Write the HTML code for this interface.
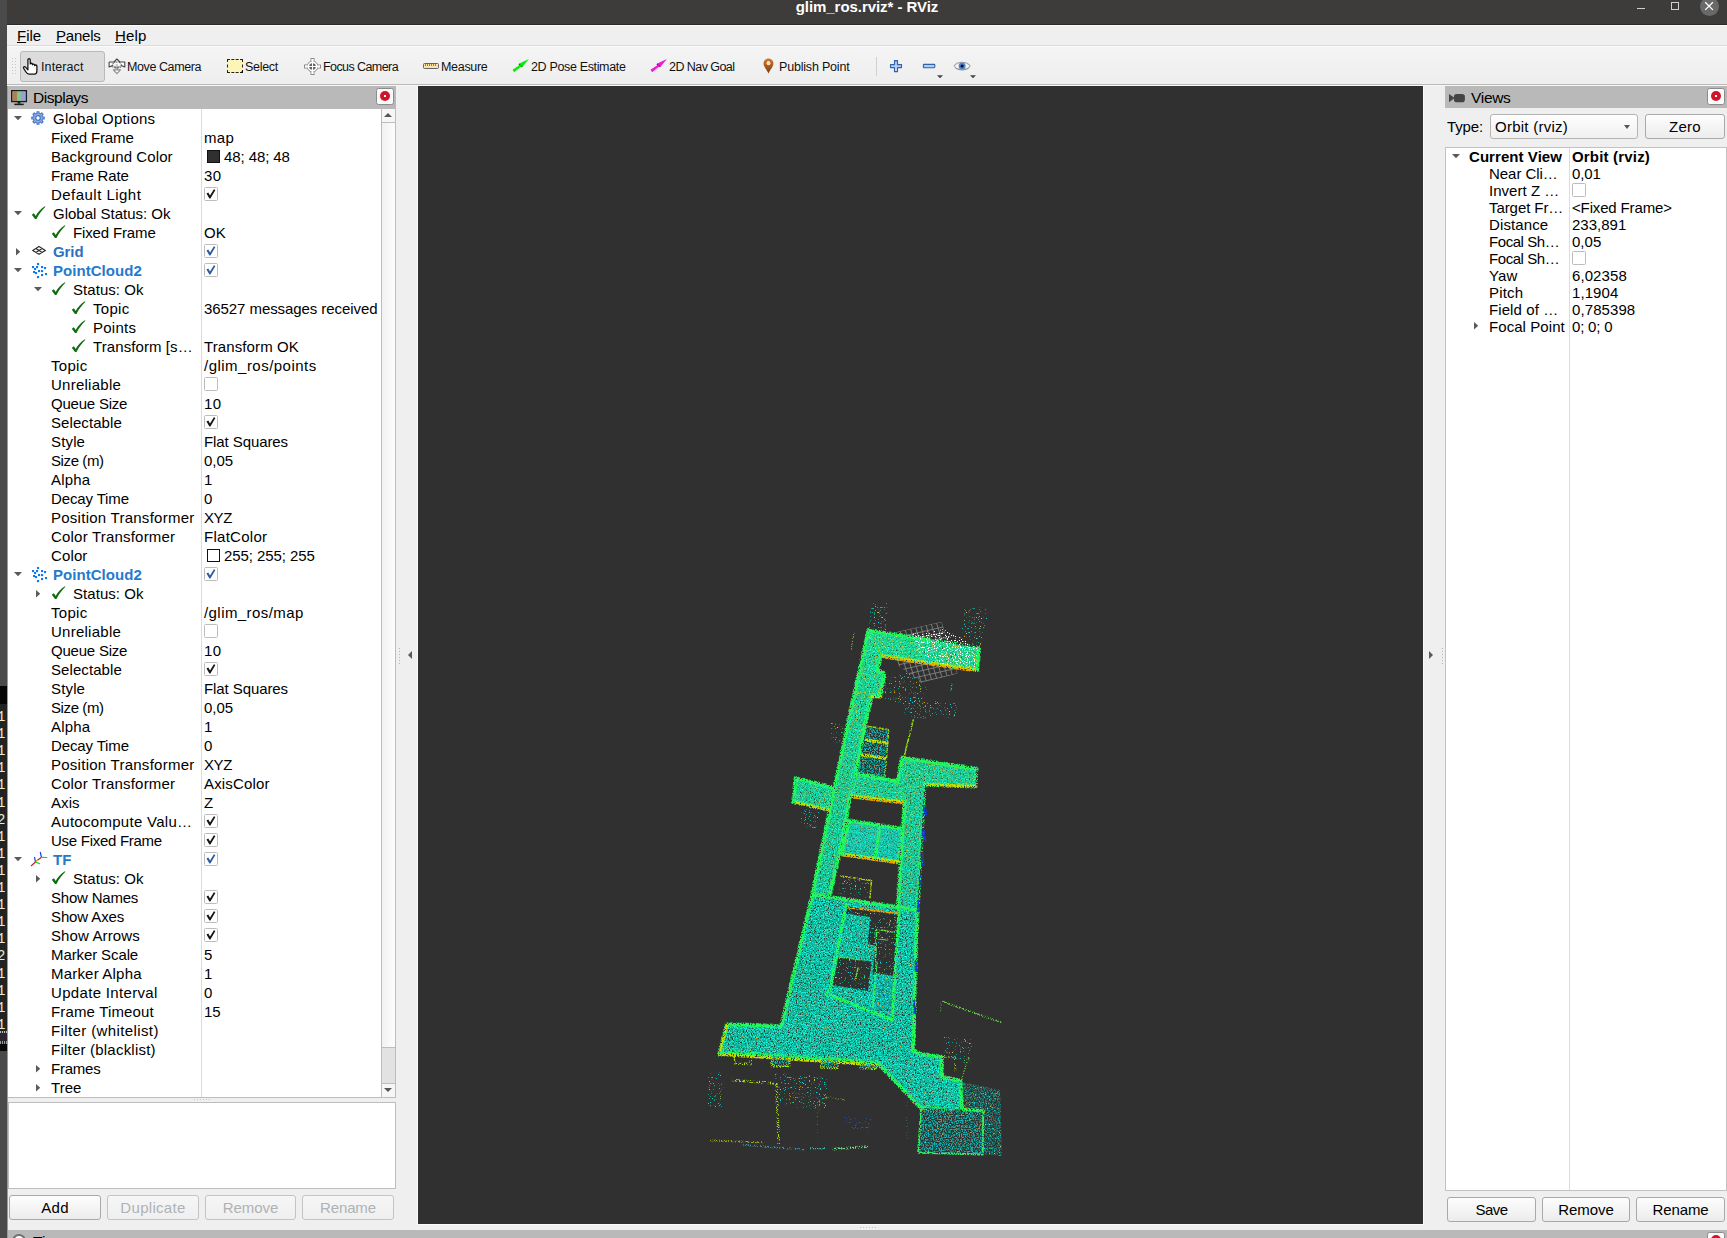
<!DOCTYPE html>
<html><head><meta charset="utf-8"><title>glim_ros.rviz* - RViz</title>
<style>
*{box-sizing:border-box;margin:0;padding:0}
html,body{width:1727px;height:1238px;overflow:hidden}
body{position:relative;background:#efefef;font-family:"Liberation Sans",sans-serif;font-size:15px;color:#000;line-height:19px}
.abs{position:absolute}
.t{position:absolute;white-space:nowrap;line-height:19px;height:19px}
#leftstrip{left:0;top:0;width:7px;height:1238px;background:#4a4a4a}
#titlebar{left:7px;top:0;width:1720px;height:25px;background:#3d3c3b}
#title{left:7px;width:1720px;top:-3px;text-align:center;color:#fff;font-weight:bold;font-size:15px;line-height:19px}
#menubar{left:7px;top:25px;width:1720px;height:21px;background:#efefef;border-top:1px solid #fbfbfb;border-bottom:1px solid #dcdcdc}
#toolbar{left:7px;top:46px;width:1720px;height:39px;background:linear-gradient(#f4f4f4,#eeeeee);border-top:1px solid #fbfbfb;border-bottom:1px solid #bcbab8}
#tbline{left:7px;top:85px;width:1720px;height:1px;background:#f7f7f7}
.menu{font-size:15.5px;top:26px}
.tb{font-size:13px;top:58px;color:#111}
.dockhead{background:#b9b9b9;height:22px}
.closebtn{width:18px;height:17px;background:#fafafa;border:1px solid #8c8c8c;border-radius:2.5px}
.closebtn i{position:absolute;left:3px;top:2px;width:10px;height:10px;border-radius:50%;background:#d0142c}
.closebtn i:before{content:"";position:absolute;left:4px;top:4px;width:2px;height:2px;background:#fff4e6}

.btn{position:absolute;height:25px;border:1px solid #a9a9a9;border-radius:3px;background:linear-gradient(#fdfdfd,#ececec);text-align:center;font-size:15px;line-height:23px;color:#000}
.btn.dis{color:#aeb2b6;border-color:#c4c4c4;background:linear-gradient(#f6f6f6,#efefef)}
.cb{position:absolute;width:14px;height:14px;border:1px solid #bdbdbd;border-radius:1.5px;background:#fff}
.cb svg{position:absolute;left:0;top:0}
.arr{position:absolute;width:0;height:0}
.arr.d{border-left:4px solid transparent;border-right:4px solid transparent;border-top:4.5px solid #5c5c5c}
.arr.r{border-top:3.8px solid transparent;border-bottom:3.8px solid transparent;border-left:4.5px solid #5c5c5c}
.blue{color:#267acc;font-weight:bold}
.blue2{color:#2f6fc0;font-weight:bold}

</style></head>
<body>
<div id="leftstrip" class="abs"></div>
<div id="titlebar" class="abs"></div>
<div class="abs" style="left:0;top:686px;width:7px;height:18px;background:#060506"></div>
<div class="abs" style="left:0;top:704px;width:7px;height:327px;background:#222424;overflow:hidden"><div style="position:absolute;left:-3px;top:5.0px;font-family:'Liberation Mono',monospace;font-size:14px;line-height:16px;color:#ecebd2">1</div><div style="position:absolute;left:-3px;top:22.1px;font-family:'Liberation Mono',monospace;font-size:14px;line-height:16px;color:#ecebd2">1</div><div style="position:absolute;left:-3px;top:39.2px;font-family:'Liberation Mono',monospace;font-size:14px;line-height:16px;color:#ecebd2">1</div><div style="position:absolute;left:-3px;top:56.3px;font-family:'Liberation Mono',monospace;font-size:14px;line-height:16px;color:#ecebd2">1</div><div style="position:absolute;left:-3px;top:73.4px;font-family:'Liberation Mono',monospace;font-size:14px;line-height:16px;color:#ecebd2">1</div><div style="position:absolute;left:-3px;top:90.5px;font-family:'Liberation Mono',monospace;font-size:14px;line-height:16px;color:#ecebd2">1</div><div style="position:absolute;left:-3px;top:107.6px;font-family:'Liberation Mono',monospace;font-size:14px;line-height:16px;color:#ecebd2">2</div><div style="position:absolute;left:-3px;top:124.7px;font-family:'Liberation Mono',monospace;font-size:14px;line-height:16px;color:#ecebd2">1</div><div style="position:absolute;left:-3px;top:141.8px;font-family:'Liberation Mono',monospace;font-size:14px;line-height:16px;color:#ecebd2">1</div><div style="position:absolute;left:-3px;top:158.9px;font-family:'Liberation Mono',monospace;font-size:14px;line-height:16px;color:#ecebd2">1</div><div style="position:absolute;left:-3px;top:176.0px;font-family:'Liberation Mono',monospace;font-size:14px;line-height:16px;color:#ecebd2">1</div><div style="position:absolute;left:-3px;top:193.1px;font-family:'Liberation Mono',monospace;font-size:14px;line-height:16px;color:#ecebd2">1</div><div style="position:absolute;left:-3px;top:210.2px;font-family:'Liberation Mono',monospace;font-size:14px;line-height:16px;color:#ecebd2">1</div><div style="position:absolute;left:-3px;top:227.3px;font-family:'Liberation Mono',monospace;font-size:14px;line-height:16px;color:#ecebd2">1</div><div style="position:absolute;left:-3px;top:244.4px;font-family:'Liberation Mono',monospace;font-size:14px;line-height:16px;color:#ecebd2">2</div><div style="position:absolute;left:-3px;top:261.5px;font-family:'Liberation Mono',monospace;font-size:14px;line-height:16px;color:#ecebd2">1</div><div style="position:absolute;left:-3px;top:278.6px;font-family:'Liberation Mono',monospace;font-size:14px;line-height:16px;color:#ecebd2">1</div><div style="position:absolute;left:-3px;top:295.7px;font-family:'Liberation Mono',monospace;font-size:14px;line-height:16px;color:#ecebd2">1</div><div style="position:absolute;left:-3px;top:312.8px;font-family:'Liberation Mono',monospace;font-size:14px;line-height:16px;color:#ecebd2">1</div></div>
<div class="abs" style="left:0;top:1031px;width:7px;height:2px;background:repeating-linear-gradient(90deg,#bbb 0 1px,#333 1px 2px)"></div>
<div class="abs" style="left:0;top:1033px;width:7px;height:8px;background:#2c2433"></div>
<div class="abs" style="left:0;top:1041px;width:7px;height:3px;background:repeating-linear-gradient(90deg,#999 0 1px,#222 1px 2px)"></div>
<div class="abs" style="left:0;top:1044px;width:7px;height:7px;background:#0a0a0a"></div>
<div class="abs" style="left:7px;top:25px;width:1px;height:1213px;background:#9a9a9a"></div>
<div id="title" class="t" style="letter-spacing:-0.05px">glim_ros.rviz* - RViz</div>
<div class="abs" style="left:1637px;top:8px;width:8px;height:1px;background:#d0d0d0"></div>
<div class="abs" style="left:1671px;top:2px;width:8px;height:8px;border:1px solid #d0d0d0"></div>
<div class="abs" style="left:1699.5px;top:-3.5px;width:19px;height:19px;border-radius:50%;background:#6a696a"></div>
<svg class="abs" style="left:1704px;top:1px" width="10" height="10" viewBox="0 0 10 10"><path d="M1.2 1.2 L8.9 8.9 M8.9 1.2 L1.2 8.9" stroke="#fff" stroke-width="1.3" fill="none"/></svg>
<div class="abs" style="left:7px;top:24px;width:1720px;height:1px;background:#2c2b2a"></div>
<div id="menubar" class="abs"></div>
<div id="toolbar" class="abs"></div>
<div id="tbline" class="abs"></div>
<div class="t menu" style="left:17px;font-size:15px;letter-spacing:-0.043px"><u>F</u>ile</div>
<div class="t menu" style="left:56px;font-size:15px;letter-spacing:-0.227px"><u>P</u>anels</div>
<div class="t menu" style="left:115px;font-size:15px;letter-spacing:0.163px"><u>H</u>elp</div>
<div class="abs" style="left:12px;top:58px;width:1px;height:17px;background:repeating-linear-gradient(180deg,#c6c6c6 0 1px,transparent 1px 3px)"></div>
<div class="abs" style="left:15px;top:58px;width:1px;height:17px;background:repeating-linear-gradient(180deg,#c6c6c6 0 1px,transparent 1px 3px)"></div>
<div class="abs" style="left:20px;top:51px;width:85px;height:31px;background:#dcdcdc;border:1px solid #b9b9b9;border-radius:3px"></div>
<svg class="abs" style="left:22px;top:56.5px" width="19" height="19" viewBox="0 0 18 18"><path d="M5.6 10.2 V2.6 C5.6 1.2 7.8 1.2 7.8 2.6 V6.6 C7.8 5.6 9.9 5.6 9.9 6.8 V7.4 C9.9 6.4 12 6.4 12 7.6 V8.2 C12 7.3 14.1 7.3 14.1 8.6 V13.2 C14.1 15 13.2 16.2 11.6 16.2 H6.8 C5.4 16.2 4.4 15.4 3.6 14 L1.6 10.8 C0.9 9.6 2.4 8.6 3.3 9.6 L5.6 12.2 Z" fill="#fff" stroke="#111" stroke-width="1.2" stroke-linejoin="round"/></svg>
<div class="t tb" style="left:41px;font-size:12.5px;letter-spacing:0.102px">Interact</div>
<svg class="abs" style="left:108px;top:57px" width="18" height="18" viewBox="0 0 18 18" fill="none" stroke-linejoin="round"><path d="M8.9 5 V13.2" stroke="#c8c8c8" stroke-width="2.2"/><path d="M5.4 12.9 L8.9 16.6 L12.5 12.9 Z" fill="#fff" stroke="#8c8c8c" stroke-width="1.1"/><path d="M1.1 5 H6 L8.9 2 L11.8 5 H16.8 V9.9 L13.3 8.4 M1.1 5 V9.9 L4.6 8.4" fill="#fff" stroke="#444" stroke-width="1.1"/><ellipse cx="8.9" cy="7.7" rx="4.4" ry="2.6" stroke="#444" stroke-width="1" stroke-dasharray="2 1"/><path d="M3.2 9 Q8.9 13.2 14.6 9" stroke="#555" stroke-width="1" stroke-dasharray="2 1"/></svg>
<div class="t tb" style="left:127px;font-size:12.5px;letter-spacing:-0.409px">Move Camera</div>
<div class="abs" style="left:227px;top:59px;width:16px;height:14px;background:#fdf5b8;border:1px dashed #222"></div>
<div class="abs" style="left:240px;top:70px;width:0;height:0;border-left:3px solid transparent;border-bottom:3px solid #111"></div>
<div class="t tb" style="left:245px;font-size:12.5px;letter-spacing:-0.29px">Select</div>
<svg class="abs" style="left:303px;top:57px" width="19" height="19" viewBox="0 0 19 19"><g fill="#fff" stroke="#8a8a8a" stroke-width="1"><rect x="8" y="1.5" width="3" height="16"/><rect x="1.5" y="8" width="16" height="3"/><circle cx="9.5" cy="9.5" r="5.4"/></g><rect x="8.55" y="2.2" width="1.9" height="14.6" fill="#fff"/><rect x="2.2" y="8.55" width="14.6" height="1.9" fill="#fff"/><circle cx="9.5" cy="9.5" r="3.3" fill="#666"/><path d="M9.5 5 V14 M5 9.5 H14" stroke="#fff" stroke-width="1"/></svg>
<div class="t tb" style="left:323px;font-size:12.5px;letter-spacing:-0.581px">Focus Camera</div>
<div class="abs" style="left:423px;top:63px;width:16px;height:6px;background:#fbe3a8;border:1px solid #62646c;border-radius:1.5px"></div>
<div class="abs" style="left:425px;top:64px;width:11px;height:2px;background:repeating-linear-gradient(90deg,#80808a 0 1px,transparent 1px 2px)"></div>
<div class="t tb" style="left:441px;font-size:12.5px;letter-spacing:-0.305px">Measure</div>
<svg class="abs" style="left:512px;top:58px" width="18" height="16" viewBox="0 0 18 16"><path d="M0.5 11.7 L7.7 6.9 L6.8 5.8 L16.9 1.1 L10.4 9.1 L9.5 8.3 L2.2 14.2 Z" fill="#08ee08"/><path d="M6.9 6 L8.3 7.4 M10.3 8.9 L9 7.8" stroke="#0a8a0a" stroke-width="1.2" fill="none"/></svg>
<div class="t tb" style="left:531px;font-size:12.5px;letter-spacing:-0.346px">2D Pose Estimate</div>
<svg class="abs" style="left:650px;top:58px" width="18" height="16" viewBox="0 0 18 16"><path d="M0.5 11.7 L7.7 6.9 L6.8 5.8 L16.9 1.1 L10.4 9.1 L9.5 8.3 L2.2 14.2 Z" fill="#f418dc"/><path d="M6.9 6 L8.3 7.4 M10.3 8.9 L9 7.8" stroke="#901080" stroke-width="1.2" fill="none"/></svg>
<div class="t tb" style="left:669px;font-size:12.5px;letter-spacing:-0.551px">2D Nav Goal</div>
<svg class="abs" style="left:763.4px;top:57.6px" width="11" height="16" viewBox="0 0 12 16" preserveAspectRatio="none"><defs><linearGradient id="pin" x1="0" y1="0" x2="0" y2="1"><stop offset="0" stop-color="#d8782a"/><stop offset="1" stop-color="#7a3a10"/></linearGradient></defs><path d="M6 0.4 C2.8 0.4 0.6 2.8 0.6 5.6 C0.6 8.6 4 11.6 6 15.6 C8 11.6 11.4 8.6 11.4 5.6 C11.4 2.8 9.2 0.4 6 0.4 Z" fill="url(#pin)"/><circle cx="6" cy="5.2" r="2.1" fill="#f4e4d4"/></svg>
<div class="t tb" style="left:779px;font-size:12.5px;letter-spacing:-0.189px">Publish Point</div>
<div class="abs" style="left:876px;top:57px;width:1px;height:19px;background:#d0d0d0"></div>
<svg class="abs" style="left:889px;top:59px" width="14" height="14" viewBox="0 0 14 14"><defs><linearGradient id="pg" x1="0" y1="0" x2="0" y2="1"><stop offset="0" stop-color="#9cc0ea"/><stop offset="1" stop-color="#d8dcf4"/></linearGradient></defs><path d="M5.5 1.6 H8.5 V5.6 H12.5 V8.6 H8.5 V12.6 H5.5 V8.6 H1.5 V5.6 H5.5 Z" fill="url(#pg)" stroke="#2c64b0" stroke-width="1.1" stroke-linejoin="round"/></svg>
<svg class="abs" style="left:922px;top:62px" width="14" height="8" viewBox="0 0 14 8"><rect x="1.4" y="2.4" width="11.4" height="3.3" rx="0.6" fill="#b4cdee" stroke="#2c64b0" stroke-width="1.1"/></svg>
<svg class="abs" style="left:937px;top:75px" width="6" height="4" viewBox="0 0 6 4"><path d="M0 0.3 H6 L3 3.2 Z" fill="#444"/></svg>
<svg class="abs" style="left:953px;top:60px" width="18" height="12" viewBox="0 0 18 12"><path d="M1 6 C4 1.2 14 1.2 17.2 6 C14 10.6 4 10.6 1 6 Z" fill="#f6f6f6" stroke="#a8a8a8" stroke-width="1.1"/><circle cx="9.1" cy="6" r="3.5" fill="#4a86d0"/><circle cx="9.1" cy="6" r="1.6" fill="#0a0a14"/><path d="M2 7.5 C5 10.8 13 10.8 16.3 7.5" fill="none" stroke="#8c8c8c" stroke-width="0.9"/></svg>
<svg class="abs" style="left:970px;top:75px" width="6" height="4" viewBox="0 0 6 4"><path d="M0 0.3 H6 L3 3.2 Z" fill="#444"/></svg>
<div class="abs dockhead" style="left:8px;top:86px;width:388px;height:23px"></div>
<svg class="abs" style="left:10.5px;top:90px" width="17" height="16" viewBox="0 0 18 17"><rect x="0.75" y="0.75" width="15.5" height="11.5" fill="#8e9ad0" stroke="#1a1a1a" stroke-width="1.5"/><rect x="1.5" y="1.5" width="5" height="10" fill="#b08050"/><rect x="6.5" y="1.5" width="4" height="10" fill="#80c890"/><rect x="10.5" y="1.5" width="5" height="10" fill="#98a0d8"/><rect x="7" y="12.5" width="3" height="2" fill="#1a1a1a"/><rect x="3.5" y="14.5" width="10" height="1.6" fill="#1a1a1a"/></svg>
<div class="t" style="left:33px;top:88px;font-size:15.5px;letter-spacing:-0.45px">Displays</div>
<div class="abs closebtn" style="left:376px;top:88px"><i></i></div>
<div class="abs" style="left:8px;top:109px;width:373px;height:988px;background:#fff"></div>
<div class="abs" style="left:201px;top:109px;width:1px;height:988px;background:#dcdcdc"></div>
<div class="abs" style="left:381px;top:109px;width:15px;height:988px;background:#f0f0f0;border-left:1px solid #bdbdbd;border-right:1px solid #bdbdbd"></div>
<div class="abs" style="left:382px;top:109px;width:13px;height:14px;background:#f6f6f6;border-bottom:1px solid #bdbdbd"></div>
<div class="abs" style="left:382px;top:1083px;width:13px;height:14px;background:#f6f6f6;border-top:1px solid #bdbdbd"></div>
<div class="abs" style="left:382px;top:123px;width:13px;height:924px;background:linear-gradient(90deg,#f1f1f1,#fdfdfd)"></div>
<div class="abs" style="left:382px;top:1047px;width:13px;height:36px;background:#e2e2e2;border-top:1px solid #bdbdbd"></div>
<div class="arr abs" style="left:384px;top:113px;border-left:4px solid transparent;border-right:4px solid transparent;border-bottom:4px solid #555"></div>
<div class="arr abs" style="left:384px;top:1088px;border-left:4px solid transparent;border-right:4px solid transparent;border-top:4px solid #555"></div>
<svg class="abs" style="left:14px;top:116px" width="8" height="5" viewBox="0 0 8 5"><path d="M0 0 H8 L4 4.3 Z" fill="#5a5a5a"/></svg>
<svg class="abs" style="left:31px;top:111px" width="14" height="14" viewBox="0 0 14 14"><path d="M11.47 5.93 L13.22 6.01 L13.22 7.99 L11.47 8.07 L10.92 9.40 L12.10 10.70 L10.70 12.10 L9.40 10.92 L8.07 11.47 L7.99 13.22 L6.01 13.22 L5.93 11.47 L4.60 10.92 L3.30 12.10 L1.90 10.70 L3.08 9.40 L2.53 8.07 L0.78 7.99 L0.78 6.01 L2.53 5.93 L3.08 4.60 L1.90 3.30 L3.30 1.90 L4.60 3.08 L5.93 2.53 L6.01 0.78 L7.99 0.78 L8.07 2.53 L9.40 3.08 L10.70 1.90 L12.10 3.30 L10.92 4.60 Z" fill="#aaa8dc" stroke="#3b7ac8" stroke-width="1.1" stroke-linejoin="round"/><circle cx="7" cy="7" r="2.3" fill="#fff" stroke="#3b7ac8" stroke-width="1.3"/></svg>
<div class="t" style="left:53px;top:109px;letter-spacing:0.213px">Global Options</div>
<div class="t" style="left:51px;top:128px;letter-spacing:-0.144px">Fixed Frame</div>
<div class="t" style="left:204px;top:128px;letter-spacing:0.273px">map</div>
<div class="t" style="left:51px;top:147px;letter-spacing:0.102px">Background Color</div>
<div class="abs" style="left:207px;top:150px;width:13px;height:13px;background:#303030;border:1px solid #111"></div>
<div class="t" style="left:224px;top:147px;letter-spacing:-0.092px">48; 48; 48</div>
<div class="t" style="left:51px;top:166px;letter-spacing:-0.149px">Frame Rate</div>
<div class="t" style="left:204px;top:166px;letter-spacing:0.308px">30</div>
<div class="t" style="left:51px;top:185px;letter-spacing:0.468px">Default Light</div>
<div class="cb" style="left:204px;top:187px"><svg width="12" height="12" viewBox="0 0 12 12"><path d="M1.5 5.4 L3.3 4.6 L5 7.6 L8.9 1.2 L10.4 2 L5.4 10.6 L4.4 10.6 Z" fill="#141414"/></svg></div>
<svg class="abs" style="left:14px;top:211px" width="8" height="5" viewBox="0 0 8 5"><path d="M0 0 H8 L4 4.3 Z" fill="#5a5a5a"/></svg>
<svg class="abs" style="left:31px;top:206px" width="15" height="14" viewBox="0 0 15 14"><path d="M0.8 8.8 L2.9 7.2 L4.7 10 C6.6 6.4 9.8 2.8 13.9 0.2 L14.4 0.8 C10.9 4.1 7.7 8.4 5.5 13.1 L4 13.1 Z" fill="#0e6d0e"/></svg>
<div class="t" style="left:53px;top:204px;letter-spacing:-0.003px">Global Status: Ok</div>
<svg class="abs" style="left:51px;top:225px" width="15" height="14" viewBox="0 0 15 14"><path d="M0.8 8.8 L2.9 7.2 L4.7 10 C6.6 6.4 9.8 2.8 13.9 0.2 L14.4 0.8 C10.9 4.1 7.7 8.4 5.5 13.1 L4 13.1 Z" fill="#0e6d0e"/></svg>
<div class="t" style="left:73px;top:223px;letter-spacing:-0.144px">Fixed Frame</div>
<div class="t" style="left:204px;top:223px;letter-spacing:0.164px">OK</div>
<svg class="abs" style="left:16px;top:248px" width="5" height="8" viewBox="0 0 5 8"><path d="M0 0 V7.4 L4.2 3.7 Z" fill="#5a5a5a"/></svg>
<svg class="abs" style="left:31px;top:245px" width="16" height="11" viewBox="0 0 16 11"><path d="M8 1.6 L14.4 5.45 L8 9.3 L1.7 5.45 Z M4.85 3.5 L11.2 7.4 M11.2 3.5 L4.85 7.4" fill="none" stroke="#2a2a2a" stroke-width="1.15" stroke-linejoin="round"/></svg>
<div class="t blue2" style="left:53px;top:242px;letter-spacing:-0.084px">Grid</div>
<div class="cb" style="left:204px;top:244px"><svg width="12" height="12" viewBox="0 0 12 12"><path d="M1.5 5.4 L3.3 4.6 L5 7.6 L8.9 1.2 L10.4 2 L5.4 10.6 L4.4 10.6 Z" fill="#2c5aa0"/></svg></div>
<svg class="abs" style="left:14px;top:268px" width="8" height="5" viewBox="0 0 8 5"><path d="M0 0 H8 L4 4.3 Z" fill="#5a5a5a"/></svg>
<svg class="abs" style="left:31px;top:262px" width="17" height="17" viewBox="0 0 17 17" fill="#0a78f0"><rect x="6" y="1" width="2.1" height="2.1"/><rect x="1" y="4" width="2.1" height="2.1"/><rect x="5" y="4" width="2.1" height="2.1"/><rect x="10" y="4" width="2.1" height="2.1"/><rect x="13" y="5" width="2.1" height="2.1"/><rect x="3" y="6" width="2.1" height="2.1"/><rect x="7" y="8" width="2.1" height="2.1"/><rect x="10" y="8" width="2.1" height="2.1"/><rect x="2" y="9" width="2.1" height="2.1"/><rect x="4" y="10" width="2.1" height="2.1"/><rect x="14" y="11" width="2.1" height="2.1"/><rect x="10" y="12" width="2.1" height="2.1"/><rect x="6" y="14" width="2.1" height="2.1"/></svg>
<div class="t blue" style="left:53px;top:261px;letter-spacing:0.043px">PointCloud2</div>
<div class="cb" style="left:204px;top:263px"><svg width="12" height="12" viewBox="0 0 12 12"><path d="M1.5 5.4 L3.3 4.6 L5 7.6 L8.9 1.2 L10.4 2 L5.4 10.6 L4.4 10.6 Z" fill="#2c5aa0"/></svg></div>
<svg class="abs" style="left:34px;top:287px" width="8" height="5" viewBox="0 0 8 5"><path d="M0 0 H8 L4 4.3 Z" fill="#5a5a5a"/></svg>
<svg class="abs" style="left:51px;top:282px" width="15" height="14" viewBox="0 0 15 14"><path d="M0.8 8.8 L2.9 7.2 L4.7 10 C6.6 6.4 9.8 2.8 13.9 0.2 L14.4 0.8 C10.9 4.1 7.7 8.4 5.5 13.1 L4 13.1 Z" fill="#0e6d0e"/></svg>
<div class="t" style="left:73px;top:280px;letter-spacing:0.057px">Status: Ok</div>
<svg class="abs" style="left:71px;top:301px" width="15" height="14" viewBox="0 0 15 14"><path d="M0.8 8.8 L2.9 7.2 L4.7 10 C6.6 6.4 9.8 2.8 13.9 0.2 L14.4 0.8 C10.9 4.1 7.7 8.4 5.5 13.1 L4 13.1 Z" fill="#0e6d0e"/></svg>
<div class="t" style="left:93px;top:299px;letter-spacing:0.297px">Topic</div>
<div class="t" style="left:204px;top:299px;letter-spacing:-0.070px">36527 messages received</div>
<svg class="abs" style="left:71px;top:320px" width="15" height="14" viewBox="0 0 15 14"><path d="M0.8 8.8 L2.9 7.2 L4.7 10 C6.6 6.4 9.8 2.8 13.9 0.2 L14.4 0.8 C10.9 4.1 7.7 8.4 5.5 13.1 L4 13.1 Z" fill="#0e6d0e"/></svg>
<div class="t" style="left:93px;top:318px;letter-spacing:0.252px">Points</div>
<svg class="abs" style="left:71px;top:339px" width="15" height="14" viewBox="0 0 15 14"><path d="M0.8 8.8 L2.9 7.2 L4.7 10 C6.6 6.4 9.8 2.8 13.9 0.2 L14.4 0.8 C10.9 4.1 7.7 8.4 5.5 13.1 L4 13.1 Z" fill="#0e6d0e"/></svg>
<div class="t" style="left:93px;top:337px;letter-spacing:0.091px">Transform [s…</div>
<div class="t" style="left:204px;top:337px;letter-spacing:0.106px">Transform OK</div>
<div class="t" style="left:51px;top:356px;letter-spacing:0.297px">Topic</div>
<div class="t" style="left:204px;top:356px;letter-spacing:0.478px">/glim_ros/points</div>
<div class="t" style="left:51px;top:375px;letter-spacing:0.256px">Unreliable</div>
<div class="cb" style="left:204px;top:377px"></div>
<div class="t" style="left:51px;top:394px;letter-spacing:-0.218px">Queue Size</div>
<div class="t" style="left:204px;top:394px;letter-spacing:0.308px">10</div>
<div class="t" style="left:51px;top:413px;letter-spacing:0.075px">Selectable</div>
<div class="cb" style="left:204px;top:415px"><svg width="12" height="12" viewBox="0 0 12 12"><path d="M1.5 5.4 L3.3 4.6 L5 7.6 L8.9 1.2 L10.4 2 L5.4 10.6 L4.4 10.6 Z" fill="#141414"/></svg></div>
<div class="t" style="left:51px;top:432px;letter-spacing:0.151px">Style</div>
<div class="t" style="left:204px;top:432px;letter-spacing:-0.087px">Flat Squares</div>
<div class="t" style="left:51px;top:451px;letter-spacing:-0.404px">Size (m)</div>
<div class="t" style="left:204px;top:451px;letter-spacing:0.001px">0,05</div>
<div class="t" style="left:51px;top:470px;letter-spacing:0.167px">Alpha</div>
<div class="t" style="left:204px;top:470px">1</div>
<div class="t" style="left:51px;top:489px;letter-spacing:-0.129px">Decay Time</div>
<div class="t" style="left:204px;top:489px">0</div>
<div class="t" style="left:51px;top:508px;letter-spacing:0.256px">Position Transformer</div>
<div class="t" style="left:204px;top:508px;letter-spacing:-0.391px">XYZ</div>
<div class="t" style="left:51px;top:527px;letter-spacing:0.202px">Color Transformer</div>
<div class="t" style="left:204px;top:527px;letter-spacing:0.272px">FlatColor</div>
<div class="t" style="left:51px;top:546px;letter-spacing:0.131px">Color</div>
<div class="abs" style="left:207px;top:549px;width:13px;height:13px;background:#ffffff;border:1px solid #111"></div>
<div class="t" style="left:224px;top:546px;letter-spacing:-0.073px">255; 255; 255</div>
<svg class="abs" style="left:14px;top:572px" width="8" height="5" viewBox="0 0 8 5"><path d="M0 0 H8 L4 4.3 Z" fill="#5a5a5a"/></svg>
<svg class="abs" style="left:31px;top:566px" width="17" height="17" viewBox="0 0 17 17" fill="#0a78f0"><rect x="6" y="1" width="2.1" height="2.1"/><rect x="1" y="4" width="2.1" height="2.1"/><rect x="5" y="4" width="2.1" height="2.1"/><rect x="10" y="4" width="2.1" height="2.1"/><rect x="13" y="5" width="2.1" height="2.1"/><rect x="3" y="6" width="2.1" height="2.1"/><rect x="7" y="8" width="2.1" height="2.1"/><rect x="10" y="8" width="2.1" height="2.1"/><rect x="2" y="9" width="2.1" height="2.1"/><rect x="4" y="10" width="2.1" height="2.1"/><rect x="14" y="11" width="2.1" height="2.1"/><rect x="10" y="12" width="2.1" height="2.1"/><rect x="6" y="14" width="2.1" height="2.1"/></svg>
<div class="t blue" style="left:53px;top:565px;letter-spacing:0.043px">PointCloud2</div>
<div class="cb" style="left:204px;top:567px"><svg width="12" height="12" viewBox="0 0 12 12"><path d="M1.5 5.4 L3.3 4.6 L5 7.6 L8.9 1.2 L10.4 2 L5.4 10.6 L4.4 10.6 Z" fill="#2c5aa0"/></svg></div>
<svg class="abs" style="left:36px;top:590px" width="5" height="8" viewBox="0 0 5 8"><path d="M0 0 V7.4 L4.2 3.7 Z" fill="#5a5a5a"/></svg>
<svg class="abs" style="left:51px;top:586px" width="15" height="14" viewBox="0 0 15 14"><path d="M0.8 8.8 L2.9 7.2 L4.7 10 C6.6 6.4 9.8 2.8 13.9 0.2 L14.4 0.8 C10.9 4.1 7.7 8.4 5.5 13.1 L4 13.1 Z" fill="#0e6d0e"/></svg>
<div class="t" style="left:73px;top:584px;letter-spacing:0.057px">Status: Ok</div>
<div class="t" style="left:51px;top:603px;letter-spacing:0.297px">Topic</div>
<div class="t" style="left:204px;top:603px;letter-spacing:0.431px">/glim_ros/map</div>
<div class="t" style="left:51px;top:622px;letter-spacing:0.256px">Unreliable</div>
<div class="cb" style="left:204px;top:624px"></div>
<div class="t" style="left:51px;top:641px;letter-spacing:-0.218px">Queue Size</div>
<div class="t" style="left:204px;top:641px;letter-spacing:0.308px">10</div>
<div class="t" style="left:51px;top:660px;letter-spacing:0.075px">Selectable</div>
<div class="cb" style="left:204px;top:662px"><svg width="12" height="12" viewBox="0 0 12 12"><path d="M1.5 5.4 L3.3 4.6 L5 7.6 L8.9 1.2 L10.4 2 L5.4 10.6 L4.4 10.6 Z" fill="#141414"/></svg></div>
<div class="t" style="left:51px;top:679px;letter-spacing:0.151px">Style</div>
<div class="t" style="left:204px;top:679px;letter-spacing:-0.087px">Flat Squares</div>
<div class="t" style="left:51px;top:698px;letter-spacing:-0.404px">Size (m)</div>
<div class="t" style="left:204px;top:698px;letter-spacing:0.001px">0,05</div>
<div class="t" style="left:51px;top:717px;letter-spacing:0.167px">Alpha</div>
<div class="t" style="left:204px;top:717px">1</div>
<div class="t" style="left:51px;top:736px;letter-spacing:-0.129px">Decay Time</div>
<div class="t" style="left:204px;top:736px">0</div>
<div class="t" style="left:51px;top:755px;letter-spacing:0.256px">Position Transformer</div>
<div class="t" style="left:204px;top:755px;letter-spacing:-0.391px">XYZ</div>
<div class="t" style="left:51px;top:774px;letter-spacing:0.202px">Color Transformer</div>
<div class="t" style="left:204px;top:774px;letter-spacing:0.169px">AxisColor</div>
<div class="t" style="left:51px;top:793px;letter-spacing:0.091px">Axis</div>
<div class="t" style="left:204px;top:793px">Z</div>
<div class="t" style="left:51px;top:812px;letter-spacing:0.284px">Autocompute Valu…</div>
<div class="cb" style="left:204px;top:814px"><svg width="12" height="12" viewBox="0 0 12 12"><path d="M1.5 5.4 L3.3 4.6 L5 7.6 L8.9 1.2 L10.4 2 L5.4 10.6 L4.4 10.6 Z" fill="#141414"/></svg></div>
<div class="t" style="left:51px;top:831px;letter-spacing:-0.275px">Use Fixed Frame</div>
<div class="cb" style="left:204px;top:833px"><svg width="12" height="12" viewBox="0 0 12 12"><path d="M1.5 5.4 L3.3 4.6 L5 7.6 L8.9 1.2 L10.4 2 L5.4 10.6 L4.4 10.6 Z" fill="#141414"/></svg></div>
<svg class="abs" style="left:14px;top:857px" width="8" height="5" viewBox="0 0 8 5"><path d="M0 0 H8 L4 4.3 Z" fill="#5a5a5a"/></svg>
<svg class="abs" style="left:30px;top:850px" width="18" height="18" viewBox="0 0 18 18" fill="none" stroke-width="1.15" stroke-linecap="round"><path d="M5.45 12 L1.3 15.7" stroke="#d01828"/><path d="M6.5 11 L11.5 7.3" stroke="#d01828"/><path d="M5.9 11.6 L7.8 10.3" stroke="#f0c020"/><path d="M5.45 12 L4.6 7.3" stroke="#0838f0"/><path d="M5.45 12 L9.6 13.6" stroke="#10e020"/><path d="M11.5 7.3 L10.8 4.5 L10.3 2.3" stroke="#0838f0"/><path d="M11.5 7.4 L16.9 7.5" stroke="#10e020"/></svg>
<div class="t blue" style="left:53px;top:850px;letter-spacing:-0.013px">TF</div>
<div class="cb" style="left:204px;top:852px"><svg width="12" height="12" viewBox="0 0 12 12"><path d="M1.5 5.4 L3.3 4.6 L5 7.6 L8.9 1.2 L10.4 2 L5.4 10.6 L4.4 10.6 Z" fill="#2c5aa0"/></svg></div>
<svg class="abs" style="left:36px;top:875px" width="5" height="8" viewBox="0 0 5 8"><path d="M0 0 V7.4 L4.2 3.7 Z" fill="#5a5a5a"/></svg>
<svg class="abs" style="left:51px;top:871px" width="15" height="14" viewBox="0 0 15 14"><path d="M0.8 8.8 L2.9 7.2 L4.7 10 C6.6 6.4 9.8 2.8 13.9 0.2 L14.4 0.8 C10.9 4.1 7.7 8.4 5.5 13.1 L4 13.1 Z" fill="#0e6d0e"/></svg>
<div class="t" style="left:73px;top:869px;letter-spacing:0.057px">Status: Ok</div>
<div class="t" style="left:51px;top:888px;letter-spacing:-0.210px">Show Names</div>
<div class="cb" style="left:204px;top:890px"><svg width="12" height="12" viewBox="0 0 12 12"><path d="M1.5 5.4 L3.3 4.6 L5 7.6 L8.9 1.2 L10.4 2 L5.4 10.6 L4.4 10.6 Z" fill="#141414"/></svg></div>
<div class="t" style="left:51px;top:907px;letter-spacing:-0.112px">Show Axes</div>
<div class="cb" style="left:204px;top:909px"><svg width="12" height="12" viewBox="0 0 12 12"><path d="M1.5 5.4 L3.3 4.6 L5 7.6 L8.9 1.2 L10.4 2 L5.4 10.6 L4.4 10.6 Z" fill="#141414"/></svg></div>
<div class="t" style="left:51px;top:926px;letter-spacing:0.115px">Show Arrows</div>
<div class="cb" style="left:204px;top:928px"><svg width="12" height="12" viewBox="0 0 12 12"><path d="M1.5 5.4 L3.3 4.6 L5 7.6 L8.9 1.2 L10.4 2 L5.4 10.6 L4.4 10.6 Z" fill="#141414"/></svg></div>
<div class="t" style="left:51px;top:945px;letter-spacing:-0.105px">Marker Scale</div>
<div class="t" style="left:204px;top:945px">5</div>
<div class="t" style="left:51px;top:964px;letter-spacing:0.194px">Marker Alpha</div>
<div class="t" style="left:204px;top:964px">1</div>
<div class="t" style="left:51px;top:983px;letter-spacing:0.325px">Update Interval</div>
<div class="t" style="left:204px;top:983px">0</div>
<div class="t" style="left:51px;top:1002px;letter-spacing:0.157px">Frame Timeout</div>
<div class="t" style="left:204px;top:1002px">15</div>
<div class="t" style="left:51px;top:1021px;letter-spacing:0.387px">Filter (whitelist)</div>
<div class="t" style="left:51px;top:1040px;letter-spacing:0.220px">Filter (blacklist)</div>
<svg class="abs" style="left:36px;top:1065px" width="5" height="8" viewBox="0 0 5 8"><path d="M0 0 V7.4 L4.2 3.7 Z" fill="#5a5a5a"/></svg>
<div class="t" style="left:51px;top:1059px;letter-spacing:-0.240px">Frames</div>
<svg class="abs" style="left:36px;top:1084px" width="5" height="8" viewBox="0 0 5 8"><path d="M0 0 V7.4 L4.2 3.7 Z" fill="#5a5a5a"/></svg>
<div class="t" style="left:51px;top:1078px;letter-spacing:0.029px">Tree</div>
<div class="abs" style="left:8px;top:1097px;width:388px;height:1px;background:#bdbdbd"></div>
<div class="abs" style="left:194px;top:1099px;width:16px;height:1px;background:repeating-linear-gradient(90deg,#c8c8c8 0 1px,transparent 1px 3px)"></div>
<div class="abs" style="left:8px;top:1102px;width:388px;height:87px;background:#fff;border:1px solid #bdbdbd"></div>
<div class="btn" style="left:9px;top:1195px;width:92px;letter-spacing:0.303px">Add</div>
<div class="btn dis" style="left:107px;top:1195px;width:92px;letter-spacing:0.307px">Duplicate</div>
<div class="btn dis" style="left:205px;top:1195px;width:91px;letter-spacing:-0.092px">Remove</div>
<div class="btn dis" style="left:302px;top:1195px;width:92px;letter-spacing:-0.15px">Rename</div>
<div class="abs" style="left:418px;top:86px;width:1005px;height:1138px;background:#303030"></div>
<svg class="abs" style="left:418px;top:86px" width="1005" height="1138" viewBox="0 0 1005 1138">
<defs>
<filter id="fd" x="0" y="0" width="100%" height="100%" color-interpolation-filters="sRGB">
 <feTurbulence type="fractalNoise" baseFrequency="0.78" numOctaves="1" seed="11" result="n"/>
 <feColorMatrix in="n" type="matrix" values="9 0 0 0 -4.4  0 12 0 0 -8.4  0 0 12 0 -7.0  0 0 0 0 1" result="a"/>
 <feColorMatrix in="a" type="matrix" values="0 0.85 0 0 0.08  0.27 -0.1 0 0 0.68  0.28 -0.55 0 0 0.57  0 0 -0.9 0 1" result="c"/>
 <feComposite in="c" in2="SourceGraphic" operator="in"/>
</filter>
 <filter id="fdg" x="0" y="0" width="100%" height="100%" color-interpolation-filters="sRGB">
 <feTurbulence type="fractalNoise" baseFrequency="0.78" numOctaves="1" seed="47" result="n"/>
 <feColorMatrix in="n" type="matrix" values="9 0 0 0 -4.4  0 10 0 0 -5.9  0 0 12 0 -7.0  0 0 0 0 1" result="a"/>
 <feColorMatrix in="a" type="matrix" values="0.05 0.8 0 0 0.12  0.16 -0.05 0 0 0.82  0.3 -0.4 0 0 0.42  0 0 -0.9 0 1" result="c"/>
 <feComposite in="c" in2="SourceGraphic" operator="in"/>
</filter>
<linearGradient id="lgm" x1="0" y1="0" x2="0" y2="1"><stop offset="0" stop-color="#fff" stop-opacity="0.9"/><stop offset="0.3" stop-color="#fff" stop-opacity="0.62"/><stop offset="0.6" stop-color="#fff" stop-opacity="0.42"/><stop offset="1" stop-color="#fff" stop-opacity="0"/></linearGradient>
<mask id="mg" maskUnits="userSpaceOnUse" x="0" y="0" width="1005" height="1138"><rect x="0" y="480" width="1005" height="420" fill="url(#lgm)"/></mask>
<filter id="fm" x="0" y="0" width="100%" height="100%" color-interpolation-filters="sRGB">
 <feTurbulence type="fractalNoise" baseFrequency="0.78" numOctaves="1" seed="23" result="n"/>
 <feColorMatrix in="n" type="matrix" values="10 0 0 0 -4.3  0 12 0 0 -7.6  0 0 6 0 -2.5  0 0 0 0 1" result="a"/>
 <feColorMatrix in="a" type="matrix" values="0 0.8 0 0 0.06  0 -0.1 0.28 0 0.5  0 -0.4 0.4 0 0.42  0.9 0 0 0 0" result="c"/>
 <feComposite in="c" in2="SourceGraphic" operator="in"/>
</filter>
<filter id="fs" x="0" y="0" width="100%" height="100%" color-interpolation-filters="sRGB">
 <feTurbulence type="fractalNoise" baseFrequency="0.8" numOctaves="1" seed="5" result="n"/>
 <feColorMatrix in="n" type="matrix" values="12 0 0 0 -7.4  0 10 0 0 -5.6  0 0 6 0 -2.5  0 0 0 0 1" result="a"/>
 <feColorMatrix in="a" type="matrix" values="0 0.7 0 0 0.08  0 0 0.2 0 0.62  0 -0.5 0.5 0 0.4  1 0 0 0 0" result="c"/>
 <feComposite in="c" in2="SourceGraphic" operator="in"/>
</filter>
<filter id="fe" x="-5%" y="-5%" width="110%" height="110%" color-interpolation-filters="sRGB">
 <feTurbulence type="fractalNoise" baseFrequency="0.8" numOctaves="1" seed="3" result="n"/>
 <feColorMatrix in="n" type="matrix" values="0 0 0 0 0  0 0 0 0 0  0 0 0 0 0  10 0 0 0 -3.9" result="m"/>
 <feComposite in="SourceGraphic" in2="m" operator="in"/>
</filter>
<filter id="fe2" x="-5%" y="-5%" width="110%" height="110%" color-interpolation-filters="sRGB">
 <feTurbulence type="fractalNoise" baseFrequency="0.8" numOctaves="1" seed="17" result="n"/>
 <feColorMatrix in="n" type="matrix" values="0 0 0 0 0  0 0 0 0 0  0 0 0 0 0  12 0 0 0 -5.9" result="m"/>
 <feComposite in="SourceGraphic" in2="m" operator="in"/>
</filter>
<filter id="fe3" x="-5%" y="-5%" width="110%" height="110%" color-interpolation-filters="sRGB">
 <feTurbulence type="fractalNoise" baseFrequency="0.8" numOctaves="1" seed="29" result="n"/>
 <feColorMatrix in="n" type="matrix" values="0 0 0 0 0  0 0 0 0 0  0 0 0 0 0  12 0 0 0 -7.4" result="m"/>
 <feComposite in="SourceGraphic" in2="m" operator="in"/>
</filter>
<filter id="soft" x="0" y="0" width="100%" height="100%" filterUnits="userSpaceOnUse" color-interpolation-filters="sRGB"><feGaussianBlur stdDeviation="0.45"/></filter>
</defs>
<g filter="url(#soft)">
<g stroke="#8c8c8c" stroke-width="0.9" fill="none" opacity="0.9">
<clipPath id="gc"><polygon points="471.7,547.6 523.7,535.7 539.5,587.6 503.2,597.3 473.5,574.3"/></clipPath><g clip-path="url(#gc)">
<polyline points="471.7,547.6 487.4,599.5" fill="none" />
<polyline points="471.7,547.6 523.7,535.7" fill="none" />
<polyline points="476.9,546.4 492.6,598.3" fill="none" />
<polyline points="473.3,552.8 525.3,540.9" fill="none" />
<polyline points="482.1,545.2 497.8,597.1" fill="none" />
<polyline points="474.8,558.0 526.9,546.1" fill="none" />
<polyline points="487.3,544.0 503.0,595.9" fill="none" />
<polyline points="476.4,563.2 528.4,551.3" fill="none" />
<polyline points="492.5,542.8 508.2,594.7" fill="none" />
<polyline points="478.0,568.4 530.0,556.5" fill="none" />
<polyline points="497.7,541.7 513.5,593.5" fill="none" />
<polyline points="479.5,573.5 531.6,561.7" fill="none" />
<polyline points="502.9,540.5 518.7,592.4" fill="none" />
<polyline points="481.1,578.7 533.2,566.8" fill="none" />
<polyline points="508.1,539.3 523.9,591.2" fill="none" />
<polyline points="482.7,583.9 534.8,572.0" fill="none" />
<polyline points="513.3,538.1 529.1,590.0" fill="none" />
<polyline points="484.3,589.1 536.3,577.2" fill="none" />
<polyline points="518.5,536.9 534.3,588.8" fill="none" />
<polyline points="485.8,594.3 537.9,582.4" fill="none" />
<polyline points="523.7,535.7 539.5,587.6" fill="none" />
<polyline points="487.4,599.5 539.5,587.6" fill="none" />
</g></g>
<g filter="url(#fs)" fill="none" stroke="#fff" stroke-width="5" stroke-linejoin="round">
<polygon points="450.5,544.6 463.0,570.0 459.0,584.0 466.2,587.6 462.6,609.4 454.0,609.4 448.0,634.0 437.7,687.5 432.2,709.6 422.8,761.6 411.8,808.8 394.4,808.5 430.7,634.0" />
<polygon points="450.5,544.6 560.7,562.1 559.5,584.0 462.6,569.4" />
<polygon points="437.7,687.5 479.5,695.4 486.6,715.9 432.2,709.6" />
<polygon points="484.2,671.8 558.2,682.8 557.4,700.1 506.3,698.6 501.0,794.0 499.1,824.0 479.7,823.0 486.6,715.9 479.5,695.4" />
<polygon points="377.9,692.3 414.9,701.7 411.0,723.8 375.5,715.9" />
<polygon points="430.7,734.8 484.2,742.7 481.0,775.7 423.6,767.9" />
<polygon points="394.4,808.5 499.1,824.0 495.2,964.6 503.6,968.3 523.4,971.1 524.0,990.9 542.6,994.9 543.8,1023.2 503.1,1022.0 459.5,976.8 315.9,966.5 301.4,968.5 309.1,938.4 363.4,940.3" />
</g>
<g filter="url(#fd)" fill="#fff">
<polygon points="450.5,544.6 463.0,570.0 459.0,584.0 466.2,587.6 462.6,609.4 454.0,609.4 448.0,634.0 437.7,687.5 432.2,709.6 422.8,761.6 411.8,808.8 394.4,808.5 430.7,634.0" />
<polygon points="450.5,544.6 560.7,562.1 559.5,584.0 462.6,569.4" />
<polygon points="437.7,687.5 479.5,695.4 486.6,715.9 432.2,709.6" />
<polygon points="484.2,671.8 558.2,682.8 557.4,700.1 506.3,698.6 501.0,794.0 499.1,824.0 479.7,823.0 486.6,715.9 479.5,695.4" />
<polygon points="377.9,692.3 414.9,701.7 411.0,723.8 375.5,715.9" />
<polygon points="430.7,734.8 484.2,742.7 481.0,775.7 423.6,767.9" />
<path fill-rule="evenodd" d="M394.4 808.5 L499.1 824.0 L495.2 964.6 L503.6 968.3 L523.4 971.1 L524.0 990.9 L542.6 994.9 L543.8 1023.2 L503.1 1022.0 L459.5 976.8 L315.9 966.5 L301.4 968.5 L309.1 938.4 L363.4 940.3 Z M420.5 871.0 L453.5 875.5 L450.0 905.0 L414.4 899.0 Z M429.0 820.5 L480.7 828.5 L476.5 890.0 L454.5 886.5 L457.5 860.0 L450.0 858.0 L452.0 831.0 L428.0 827.5 Z"/>
</g>
<g filter="url(#fe2)" fill="none" stroke="#22f068" stroke-width="4.6" stroke-linejoin="round">
<polygon points="450.5,544.6 463.0,570.0 459.0,584.0 466.2,587.6 462.6,609.4 454.0,609.4 448.0,634.0 437.7,687.5 432.2,709.6 422.8,761.6 411.8,808.8 394.4,808.5 430.7,634.0" />
<polygon points="450.5,544.6 560.7,562.1 559.5,584.0 462.6,569.4" />
<polygon points="437.7,687.5 479.5,695.4 486.6,715.9 432.2,709.6" />
<polygon points="484.2,671.8 558.2,682.8 557.4,700.1 506.3,698.6 501.0,794.0 499.1,824.0 479.7,823.0 486.6,715.9 479.5,695.4" />
<polygon points="377.9,692.3 414.9,701.7 411.0,723.8 375.5,715.9" />
<polygon points="430.7,734.8 484.2,742.7 481.0,775.7 423.6,767.9" />
<polygon points="394.4,808.5 499.1,824.0 495.2,964.6 503.6,968.3 523.4,971.1 524.0,990.9 542.6,994.9 543.8,1023.2 503.1,1022.0 459.5,976.8 315.9,966.5 301.4,968.5 309.1,938.4 363.4,940.3" />
</g>
<g mask="url(#mg)"><g filter="url(#fdg)" fill="#fff">
<polygon points="450.5,544.6 463.0,570.0 459.0,584.0 466.2,587.6 462.6,609.4 454.0,609.4 448.0,634.0 437.7,687.5 432.2,709.6 422.8,761.6 411.8,808.8 394.4,808.5 430.7,634.0" />
<polygon points="450.5,544.6 560.7,562.1 559.5,584.0 462.6,569.4" />
<polygon points="437.7,687.5 479.5,695.4 486.6,715.9 432.2,709.6" />
<polygon points="484.2,671.8 558.2,682.8 557.4,700.1 506.3,698.6 501.0,794.0 499.1,824.0 479.7,823.0 486.6,715.9 479.5,695.4" />
<polygon points="377.9,692.3 414.9,701.7 411.0,723.8 375.5,715.9" />
<polygon points="430.7,734.8 484.2,742.7 481.0,775.7 423.6,767.9" />
</g></g>
<polygon points="433.0,737.0 482.0,744.5 479.0,774.0 427.0,766.0" fill="#18c0f0" opacity="0.22"/>
<g filter="url(#fm)" fill="#fff" opacity="0.6">
<polygon points="544.0,996.0 582.0,1004.0 584.0,1070.0 565.0,1068.0 565.0,1024.0 544.0,1023.0" />
</g>
<g filter="url(#fm)" fill="#fff">
<polygon points="458.6,890.0 476.5,892.0 474.0,928.0 455.0,922.0" />
<polygon points="449.6,640.3 470.8,643.4 466.9,692.3 438.5,687.5" />
<polygon points="503.1,1022.0 543.8,1023.2 565.2,1024.8 564.7,1068.4 500.2,1066.7" />
</g>
<g filter="url(#fs)" fill="#fff">
<polygon points="420.5,871.0 453.5,875.5 450.0,905.0 414.4,899.0" />
<polygon points="429.0,820.5 480.7,828.5 476.5,890.0 454.5,886.5 457.5,860.0 450.0,858.0 452.0,831.0 428.0,827.5" />
<polygon points="453.0,517.0 470.0,517.0 468.0,544.0 451.0,544.0" />
<polygon points="544.0,524.0 572.0,520.0 562.0,562.0 542.0,560.0" />
<polygon points="544.0,996.0 582.0,1004.0 584.0,1070.0 565.0,1068.0 565.0,1024.0 544.0,1023.0" />
<polygon points="526.0,951.0 555.0,954.0 552.0,978.0 526.0,972.0" />
<polygon points="356.0,987.0 409.0,990.0 409.0,1024.0 362.0,1020.0" />
<polygon points="383.0,722.0 401.0,724.0 399.0,743.0 383.0,740.0" />
<polygon points="413.0,637.0 426.0,638.0 424.0,658.0 413.0,656.0" />
<polygon points="482.0,604.0 512.0,614.0 507.0,634.0 487.0,629.0" />
<polygon points="422.8,789.9 453.5,794.6 451.9,812.0 419.0,807.0" />
<polygon points="424.0,791.0 452.0,795.5 450.0,810.0 421.0,806.0" />
<polygon points="510.0,614.0 540.0,617.0 538.0,632.0 512.0,630.0" />
<polygon points="290.0,988.0 306.0,986.0 304.0,1022.0 290.0,1020.0" />
<polygon points="465.0,590.0 497.0,586.0 511.0,604.0 487.0,619.0 466.0,612.0" />
<polygon points="466.0,590.0 494.0,588.0 504.0,602.0 485.0,614.0 467.0,609.0" />
</g>
<g filter="url(#fe)" stroke-linecap="round" stroke-linejoin="round">
<polyline points="450.5,544.6 430.7,634.0 394.4,808.5 363.4,940.3" fill="none" stroke="#24fa58" stroke-width="3.2"/>
<polyline points="450.5,544.6 512.0,554.0" fill="none" stroke="#24fa58" stroke-width="3.2"/>
<polyline points="462.6,569.4 559.5,584.0" fill="none" stroke="#c8e000" stroke-width="2.8"/>
<polyline points="466.0,571.4 552.0,584.6" fill="none" stroke="#f4a000" stroke-width="2"/>
<polyline points="560.7,562.1 559.5,584.0" fill="none" stroke="#24fa58" stroke-width="3.2"/>
<polyline points="463.0,570.0 459.0,584.0 466.2,587.6 462.6,609.4 454.0,609.4 448.0,634.0 437.7,687.5" fill="none" stroke="#24fa58" stroke-width="3.2"/>
<polyline points="454.0,610.5 463.0,611.0" fill="none" stroke="#c8e000" stroke-width="2.8"/>
<polyline points="437.7,687.5 479.5,695.4" fill="none" stroke="#24fa58" stroke-width="3.2"/>
<polyline points="432.2,709.6 486.6,715.9" fill="none" stroke="#c8e000" stroke-width="2.8"/>
<polyline points="434.0,711.4 485.0,717.4" fill="none" stroke="#f4a000" stroke-width="2"/>
<polyline points="484.2,671.8 479.5,695.4" fill="none" stroke="#24fa58" stroke-width="3.2"/>
<polyline points="484.2,671.8 558.2,682.8" fill="none" stroke="#24fa58" stroke-width="3.2"/>
<polyline points="506.3,698.6 557.4,700.1" fill="none" stroke="#c8e000" stroke-width="2.8"/>
<polyline points="486.6,715.9 481.7,794.0 479.7,823.0" fill="none" stroke="#24fa58" stroke-width="3.2"/>
<polyline points="377.9,692.3 414.9,701.7" fill="none" stroke="#24fa58" stroke-width="3.2"/>
<polyline points="375.5,715.9 411.0,723.8" fill="none" stroke="#c8e000" stroke-width="2.8"/>
<polyline points="377.9,692.3 375.5,715.9" fill="none" stroke="#24fa58" stroke-width="3.2"/>
<polyline points="432.2,709.6 422.8,761.6 411.8,808.8" fill="none" stroke="#24fa58" stroke-width="3.2"/>
<polyline points="430.7,734.8 484.2,742.7" fill="none" stroke="#24fa58" stroke-width="3.2"/>
<polyline points="423.6,767.9 481.0,775.7" fill="none" stroke="#c8e000" stroke-width="2.8"/>
<polyline points="425.0,769.6 479.0,777.2" fill="none" stroke="#f4a000" stroke-width="2"/>
<polyline points="430.7,734.8 423.6,767.9" fill="none" stroke="#24fa58" stroke-width="3.2"/>
<polyline points="462.0,740.0 457.0,772.0" fill="none" stroke="#24fa58" stroke-width="3.2"/>
<polyline points="449.6,640.3 470.8,643.4 466.9,692.3" fill="none" stroke="#a0d800" stroke-width="1.4"/>
<polyline points="448.0,654.0 469.0,657.0" fill="none" stroke="#c8e000" stroke-width="2.8"/>
<polyline points="444.0,669.0 468.0,672.5" fill="none" stroke="#c8e000" stroke-width="2.8"/>
<polyline points="495.2,634.0 485.8,671.8" fill="none" stroke="#90e000" stroke-width="1.6"/>
<polyline points="394.4,808.5 499.1,824.0" fill="none" stroke="#24fa58" stroke-width="3.2"/>
<polyline points="422.8,789.9 453.5,794.6 451.9,812.0" fill="none" stroke="#c0d000" stroke-width="1.5"/>
<polyline points="428.0,818.7 412.2,902.4 408.8,908.0 474.4,934.0 476.7,890.0 481.2,824.9" fill="none" stroke="#24fa58" stroke-width="3.2"/>
<polyline points="430.0,821.5 480.0,827.5" fill="none" stroke="#f4a000" stroke-width="2"/>
<polyline points="458.6,843.6 457.5,874.0" fill="none" stroke="#40f060" stroke-width="1.6"/>
<polyline points="462.0,844.0 475.0,846.0" fill="none" stroke="#80e040" stroke-width="1.4"/>
<polyline points="460.0,853.0 470.0,854.0" fill="none" stroke="#50e070" stroke-width="1.2"/>
<polyline points="458.6,876.0 455.0,922.0" fill="none" stroke="#30f060" stroke-width="2"/>
<polyline points="420.5,871.0 444.0,874.0" fill="none" stroke="#50e040" stroke-width="1.4"/>
<polyline points="440.0,882.0 437.0,894.0" fill="none" stroke="#60e040" stroke-width="1.5"/>
<polyline points="309.1,938.4 363.4,940.3" fill="none" stroke="#24fa58" stroke-width="3.2"/>
<polyline points="309.1,938.4 301.4,968.5" fill="none" stroke="#c8e000" stroke-width="2.8"/>
<polyline points="301.1,966.7 460.3,977.2" fill="none" stroke="#24fa58" stroke-width="3.2"/>
<polyline points="304.0,968.6 458.0,979.0" fill="none" stroke="#c8e000" stroke-width="2.8"/>
<polyline points="459.5,976.8 503.1,1022.0" fill="none" stroke="#24fa58" stroke-width="3.2"/>
<polyline points="499.1,824.0 495.2,964.6 503.6,968.3 523.4,971.1 524.0,990.9 542.6,994.9 543.8,1023.2 565.2,1024.8" fill="none" stroke="#24fa58" stroke-width="3.2"/>
<polyline points="503.1,1022.0 500.2,1066.7 564.7,1068.4 565.2,1024.8" fill="none" stroke="#30f060" stroke-width="2"/>
</g>
<g filter="url(#fm)">
<polygon points="353.0,970.0 372.0,971.0 371.0,981.0 354.0,980.0" fill="#fff"/>
<polygon points="402.4,973.0 420.4,974.0 419.4,982.4 403.4,981.4" fill="#fff"/>
<polygon points="441.8,977.0 459.2,978.0 458.2,983.0 442.8,982.0" fill="#fff"/>
</g>
<g filter="url(#fe2)" fill="none">
<polyline points="316.2,967.3 317.2,977.3 332.5,978.3 333.5,968.3" fill="none" stroke="#a8e800" stroke-width="2.4"/>
<polyline points="353.0,970.0 354.0,980.0 371.0,981.0 372.0,971.0" fill="none" stroke="#a8e800" stroke-width="2.4"/>
<polyline points="402.4,973.0 403.4,981.4 419.4,982.4 420.4,974.0" fill="none" stroke="#a8e800" stroke-width="2.4"/>
<polyline points="441.8,977.0 442.8,982.0 458.2,983.0 459.2,978.0" fill="none" stroke="#a8e800" stroke-width="2.4"/>
<polyline points="313.3,994.0 358.4,997.4 360.7,1058.2" fill="none" stroke="#a8dc18" stroke-width="2.6"/>
<polyline points="291.3,1054.2 344.5,1056.5" fill="none" stroke="#a0a020" stroke-width="2"/>
<polyline points="323.7,1058.8 386.2,1063.4" fill="none" stroke="#3890b0" stroke-width="2"/>
<polyline points="392.0,1062.3 407.0,1062.3" fill="none" stroke="#30c0a8" stroke-width="2"/>
<polyline points="414.0,1063.4 450.0,1060.5" fill="none" stroke="#70e080" stroke-width="2.6"/>
<polyline points="399.0,1022.3 402.0,1014.0 409.4,1010.7 426.8,1014.2" fill="none" stroke="#80a030" stroke-width="1.2"/>
<polyline points="399.0,1022.3 400.1,1055.9" fill="none" stroke="#60a040" stroke-width="1" stroke-dasharray="1 3"/>
<polyline points="523.3,915.1 583.4,936.5" fill="none" stroke="#60c048" stroke-width="2"/>
<polyline points="523.3,915.1 522.5,926.0" fill="none" stroke="#50a040" stroke-width="1"/>
<polyline points="524.5,970.6 537.0,971.1 537.5,985.8" fill="none" stroke="#b0d800" stroke-width="1.5"/>
<polyline points="551.1,969.4 543.2,994.9" fill="none" stroke="#60d040" stroke-width="1.3"/>
<polyline points="489.0,1016.0 489.0,1057.0" fill="none" stroke="#309070" stroke-width="1" stroke-dasharray="1 2"/>
<polyline points="436.0,546.0 433.0,564.0" fill="none" stroke="#70c020" stroke-width="1.2"/>
<polyline points="534.0,597.0 533.0,605.0" fill="none" stroke="#40c060" stroke-width="1.2"/>
</g>
<g filter="url(#fe)" stroke="#1838e0" stroke-width="3" fill="none">
<polyline points="506.0,719.0 508.0,729.0" fill="none" />
<polyline points="505.0,744.0 507.0,756.0" fill="none" />
<polyline points="504.0,767.0 505.0,780.0" fill="none" />
<polyline points="502.0,789.0 503.0,800.0" fill="none" />
<polyline points="501.0,814.0 500.0,826.0" fill="none" />
<polyline points="498.0,874.0 498.0,886.0" fill="none" />
<polyline points="496.0,914.0 497.0,928.0" fill="none" />
</g>
<g filter="url(#fe3)"><polygon points="425.6,1030.4 455.7,1032.0 452.0,1046.6 432.0,1044.0" fill="#2858d0"/></g>
<filter id="fw" x="0" y="0" width="100%" height="100%" color-interpolation-filters="sRGB"><feTurbulence type="fractalNoise" baseFrequency="0.85" numOctaves="1" seed="41" result="n"/><feColorMatrix in="n" type="matrix" values="0 0 0 0 1  0 0 0 0 1  0 0 0 0 1  14 0 0 0 -8.2" result="c"/><feComposite in="c" in2="SourceGraphic" operator="in"/></filter>
<g filter="url(#fw)"><polygon points="494.0,548.0 526.0,543.0 560.0,561.0 559.0,582.0 522.0,578.0 500.0,566.0" fill="#fff"/></g>
</g>
</svg>
<div class="abs" style="left:399px;top:648px;width:1px;height:17px;background:repeating-linear-gradient(180deg,#b4b4b4 0 1px,transparent 1px 3px)"></div>
<div class="abs" style="left:408px;top:651px;width:0;height:0;border-top:4px solid transparent;border-bottom:4px solid transparent;border-right:4px solid #5a5a5a"></div>
<div class="abs" style="left:1429px;top:651px;width:0;height:0;border-top:4px solid transparent;border-bottom:4px solid transparent;border-left:4px solid #5a5a5a"></div>
<div class="abs" style="left:1442px;top:648px;width:1px;height:17px;background:repeating-linear-gradient(180deg,#b4b4b4 0 1px,transparent 1px 3px)"></div>
<div class="abs" id="vpframe" style="left:417px;top:85px;width:1007px;height:1140px;border:1px solid #fafafa"></div>
<div class="abs dockhead" style="left:1445px;top:86px;width:282px"></div>
<svg class="abs" style="left:1448px;top:93px" width="18" height="11" viewBox="0 0 18 11"><path d="M1 1 L6.6 5.1 L1 9.3 Z" fill="#444"/><rect x="5.9" y="1" width="11" height="8.2" rx="2.8" fill="#444"/></svg>
<div class="t" style="left:1471px;top:88px;font-size:15.5px;letter-spacing:-0.313px">Views</div>
<div class="abs closebtn" style="left:1707px;top:88px"><i></i></div>
<div class="t" style="left:1447px;top:117px;font-size:15px;letter-spacing:-0.137px">Type:</div>
<div class="abs" style="left:1490px;top:114px;width:148px;height:25px;border:1px solid #b4b4b4;border-radius:3px;background:linear-gradient(#fefefe,#f0f0f0)"></div>
<div class="t" style="left:1495px;top:117px;font-size:15px;letter-spacing:0.251px">Orbit (rviz)</div>
<div class="abs" style="left:1624px;top:125px;width:0;height:0;border-left:3.5px solid transparent;border-right:3.5px solid transparent;border-top:4px solid #555"></div>
<div class="btn" style="left:1645px;top:114px;width:80px;letter-spacing:0.239px">Zero</div>
<div class="abs" style="left:1445px;top:147px;width:282px;height:1044px;background:#fff;border:1px solid #c2c2c2"></div>
<div class="abs" style="left:1569px;top:148px;width:1px;height:1042px;background:#dcdcdc"></div>
<svg class="abs" style="left:1452px;top:154px" width="8" height="5" viewBox="0 0 8 5"><path d="M0 0 H8 L4 4.3 Z" fill="#5a5a5a"/></svg>
<div class="t" style="left:1469px;top:147px;font-weight:bold;font-size:15px;letter-spacing:0.063px">Current View</div>
<div class="t" style="left:1572px;top:147px;font-weight:bold;font-size:15px;letter-spacing:0.18px">Orbit (rviz)</div>
<div class="t" style="left:1489px;top:164px;letter-spacing:-0.042px">Near Cli…</div>
<div class="t" style="left:1572px;top:164px;letter-spacing:-0.099px">0,01</div>
<div class="t" style="left:1489px;top:181px;letter-spacing:0.029px">Invert Z …</div>
<div class="cb" style="left:1572px;top:183px"></div>
<div class="t" style="left:1489px;top:198px;letter-spacing:-0.072px">Target Fr…</div>
<div class="t" style="left:1572px;top:198px;letter-spacing:-0.147px">&lt;Fixed Frame&gt;</div>
<div class="t" style="left:1489px;top:215px;letter-spacing:0.118px">Distance</div>
<div class="t" style="left:1572px;top:215px;letter-spacing:0.011px">233,891</div>
<div class="t" style="left:1489px;top:232px;letter-spacing:-0.433px">Focal Sh…</div>
<div class="t" style="left:1572px;top:232px;letter-spacing:0.026px">0,05</div>
<div class="t" style="left:1489px;top:249px;letter-spacing:-0.433px">Focal Sh…</div>
<div class="cb" style="left:1572px;top:251px"></div>
<div class="t" style="left:1489px;top:266px;letter-spacing:0.078px">Yaw</div>
<div class="t" style="left:1572px;top:266px;letter-spacing:0.083px">6,02358</div>
<div class="t" style="left:1489px;top:283px;letter-spacing:0.191px">Pitch</div>
<div class="t" style="left:1572px;top:283px;letter-spacing:0.070px">1,1904</div>
<div class="t" style="left:1489px;top:300px;letter-spacing:0.094px">Field of …</div>
<div class="t" style="left:1572px;top:300px;letter-spacing:0.092px">0,785398</div>
<div class="t" style="left:1489px;top:317px;letter-spacing:0.069px">Focal Point</div>
<div class="t" style="left:1572px;top:317px;letter-spacing:-0.200px">0; 0; 0</div>
<svg class="abs" style="left:1474px;top:322px" width="5" height="8" viewBox="0 0 5 8"><path d="M0 0 V7.4 L4.2 3.7 Z" fill="#5a5a5a"/></svg>
<div class="btn" style="left:1447px;top:1197px;width:89px;letter-spacing:-0.547px">Save</div>
<div class="btn" style="left:1542px;top:1197px;width:88px;letter-spacing:-0.042px">Remove</div>
<div class="btn" style="left:1636px;top:1197px;width:89px;letter-spacing:-0.083px">Rename</div>
<div class="abs" style="left:8px;top:1230px;width:1719px;height:8px;background:#b9b9b9"></div>
<div class="abs" style="left:12px;top:1233.6px;width:14px;height:14px;border-radius:50%;background:#fbfbfb;border:2px solid #707070"></div>
<div class="t" style="left:33px;top:1232px;font-size:15.5px">Time</div>
<div class="abs closebtn" style="left:1707px;top:1232px"><i></i></div>
<div class="abs" style="left:860px;top:1227px;width:17px;height:1px;background:repeating-linear-gradient(90deg,#c4c4c4 0 1px,transparent 1px 3px)"></div>

</body></html>
